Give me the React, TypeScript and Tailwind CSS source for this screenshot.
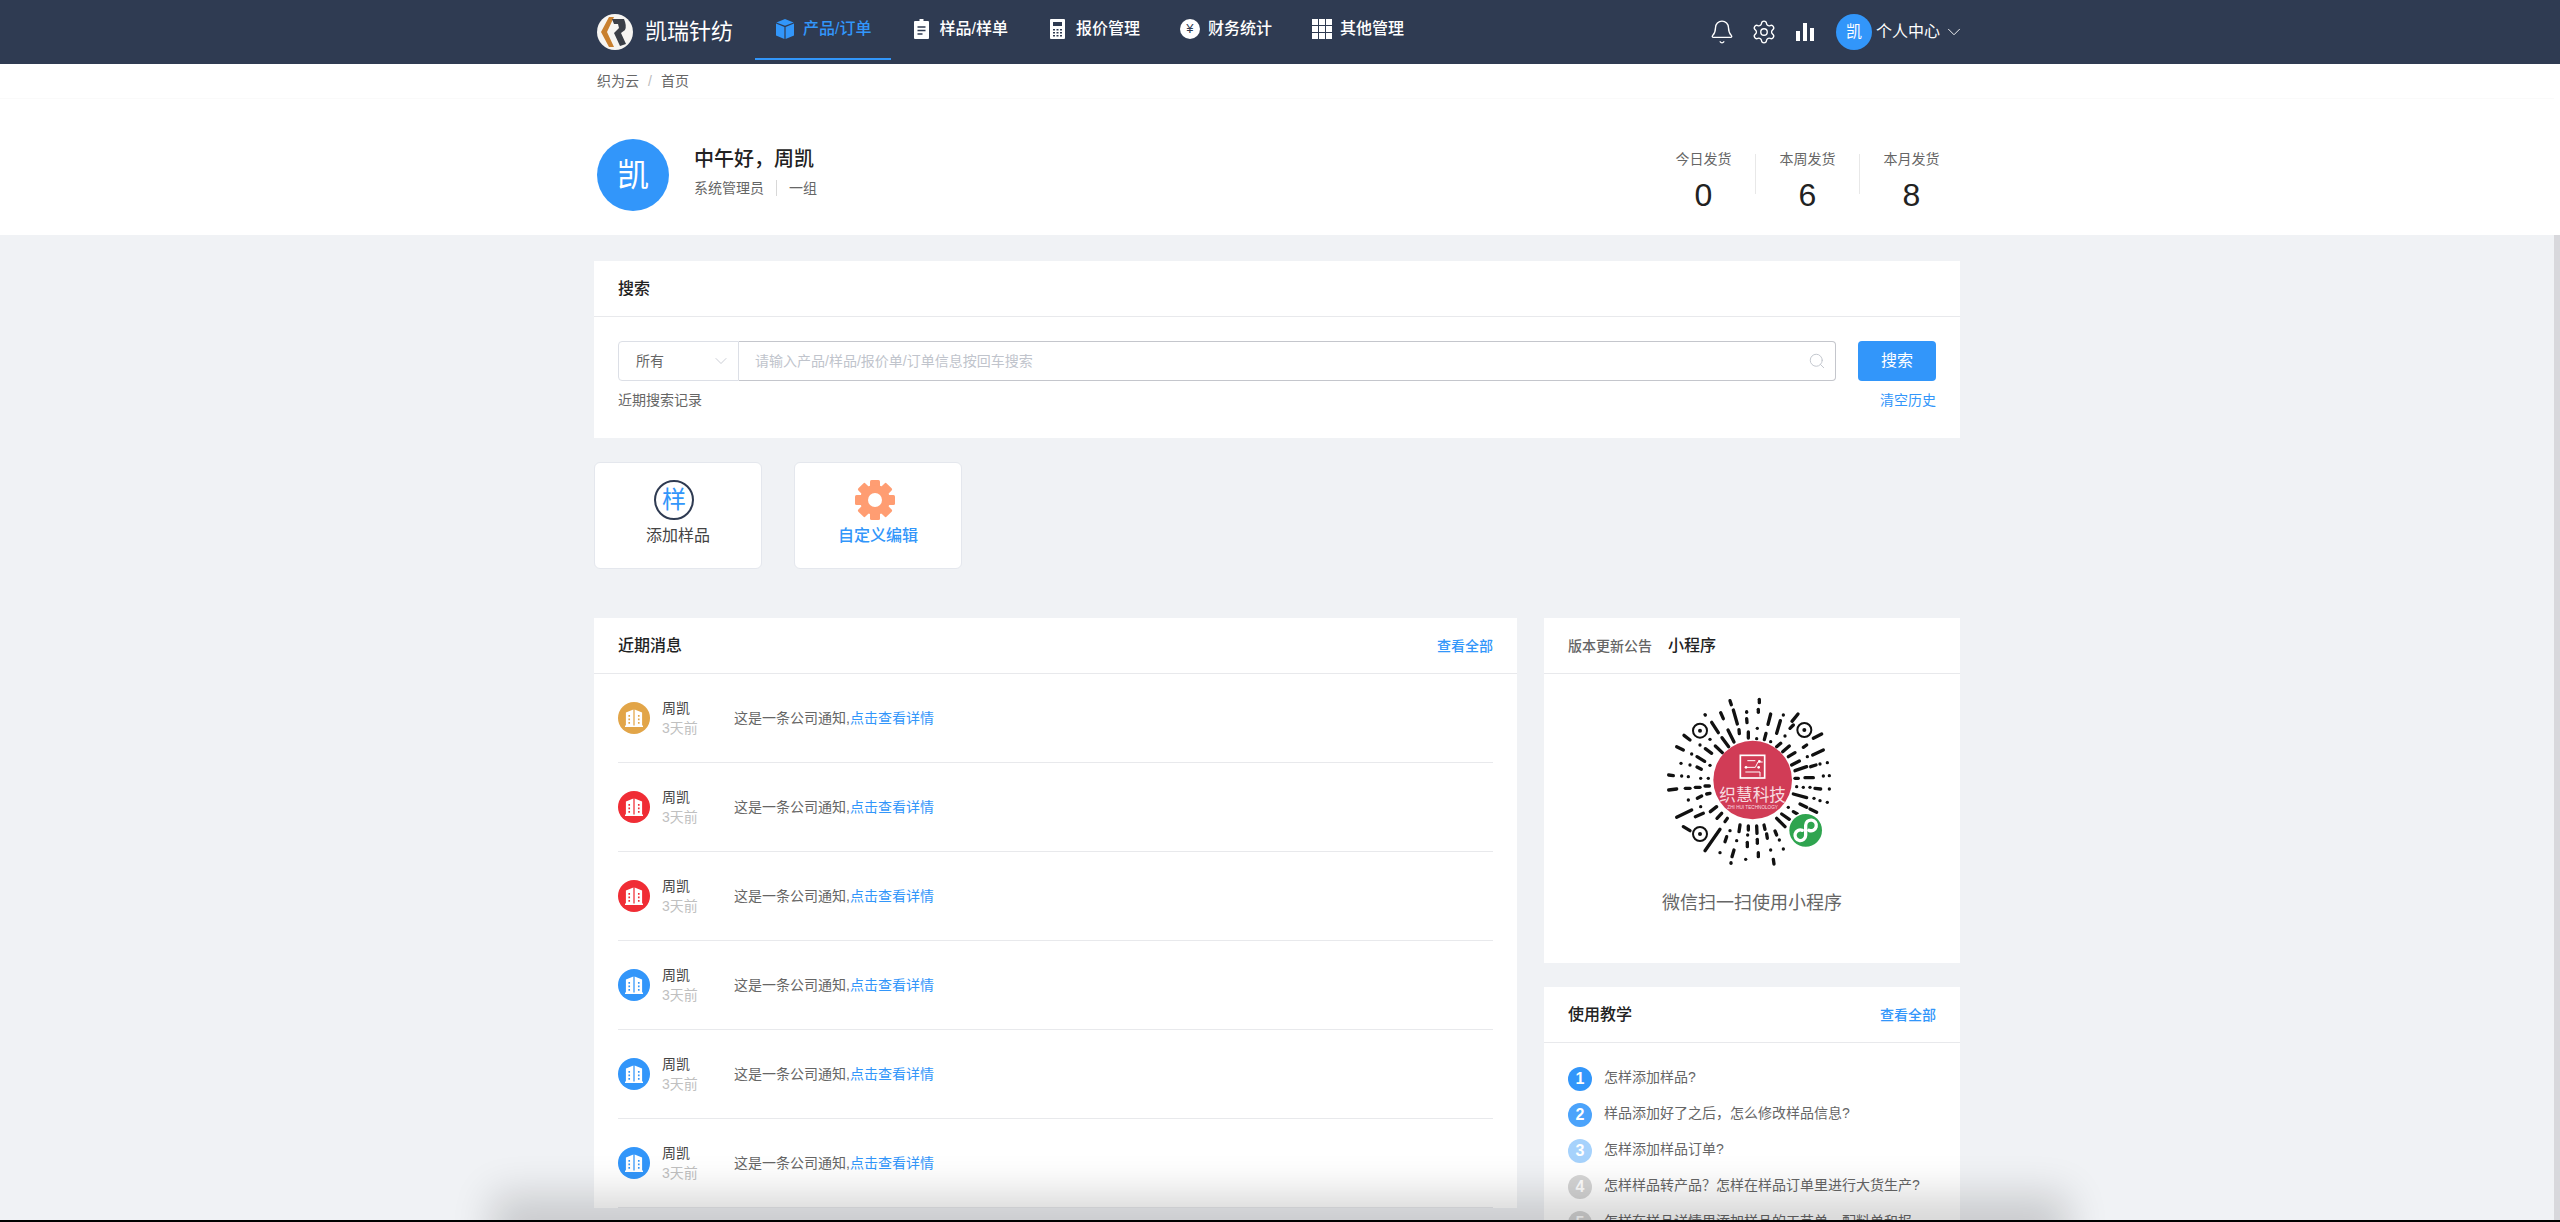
import React from "react";
import { Bell, ChevronDown, Search, Settings } from "lucide-react";

const FONT = "[font-family:'Liberation_Sans','Noto_Sans_CJK_SC',sans-serif]";

// dashes of the mini program code, in a 540 box
const QR_DASHES = [
  [210, 32, 214, 44], [298, 28, 298, 38], [295, 58, 295, 67], [182, 68, 190, 86], [220, 60, 232, 102],
  [260, 65, 260, 67], [260, 86, 261, 98], [332, 72, 324, 103], [370, 75, 370, 75], [361, 92, 350, 130],
  [414, 72, 396, 94], [135, 74, 136, 75], [155, 97, 175, 128], [292, 115, 292, 115], [237, 119, 238, 131],
  [204, 120, 222, 156], [265, 126, 265, 144], [318, 130, 313, 149], [290, 146, 290, 146], [150, 148, 150, 148],
  [186, 143, 206, 170], [166, 168, 187, 188], [136, 176, 155, 190], [111, 200, 134, 214], [72, 136, 90, 150],
  [50, 170, 70, 180], [95, 192, 95, 192], [120, 165, 120, 165], [63, 220, 63, 220], [90, 225, 90, 225],
  [111, 231, 124, 238], [150, 226, 150, 226], [26, 255, 40, 257], [65, 258, 65, 258], [85, 260, 85, 260],
  [122, 265, 122, 265], [145, 265, 145, 265], [26, 300, 50, 297], [76, 295, 90, 295], [106, 292, 120, 292],
  [135, 288, 148, 288], [112, 325, 125, 318], [140, 312, 150, 310], [85, 330, 85, 330], [50, 382, 95, 360],
  [122, 350, 122, 350], [106, 380, 130, 370], [151, 365, 170, 350], [171, 385, 185, 370], [195, 395, 202, 385],
  [70, 410, 90, 422], [135, 482, 180, 418], [180, 488, 180, 488], [200, 440, 195, 455], [210, 422, 210, 422],
  [230, 452, 230, 452], [222, 480, 216, 500], [213, 518, 213, 520], [257, 508, 257, 508], [240, 405, 237, 425],
  [265, 408, 265, 420], [263, 435, 263, 435], [262, 457, 262, 470], [290, 408, 291, 430], [292, 448, 292, 460],
  [295, 488, 295, 500], [312, 405, 315, 418], [320, 432, 322, 445], [332, 480, 332, 480], [340, 508, 342, 522],
  [345, 423, 350, 435], [358, 450, 358, 450], [370, 477, 370, 477], [350, 385, 375, 410], [365, 372, 388, 388],
  [400, 365, 412, 372], [385, 352, 385, 352], [420, 342, 440, 352], [450, 357, 470, 367], [400, 312, 440, 323],
  [462, 325, 462, 325], [480, 332, 480, 332], [502, 337, 502, 337], [410, 290, 410, 290], [430, 292, 430, 292],
  [450, 292, 450, 292], [465, 295, 482, 297], [508, 297, 508, 297], [405, 265, 415, 265], [435, 263, 460, 263],
  [490, 258, 490, 258], [508, 257, 508, 257], [405, 242, 440, 230], [452, 230, 468, 225], [480, 222, 480, 222],
  [502, 218, 502, 218], [395, 225, 418, 213], [385, 200, 405, 188], [368, 185, 388, 168], [458, 195, 490, 180],
  [430, 172, 440, 165], [442, 200, 442, 200], [350, 170, 362, 160], [332, 155, 332, 155], [375, 138, 375, 138],
  [390, 115, 400, 105], [460, 145, 485, 132],
];

const MiniCode = () => (
  <svg viewBox="0 0 540 540" className="w-[180px] h-[180px] -ml-1">
    <defs>
      <clipPath id="qr-center">
        <circle cx="278" cy="270" r="118" />
      </clipPath>
    </defs>
    <g stroke="#111" strokeWidth="10" strokeLinecap="round">
      {QR_DASHES.map((d, i) => (
        <line key={i} x1={d[0]} y1={d[1]} x2={d[2]} y2={d[3]} />
      ))}
    </g>
    {[
      [120, 122],
      [433, 120],
      [120, 432],
    ].map(([x, y]) => (
      <g key={x + "-" + y}>
        <circle cx={x} cy={y} r="21" fill="none" stroke="#111" strokeWidth="6" />
        <circle cx={x} cy={y} r="6" fill="#111" />
      </g>
    ))}
    <circle cx="278" cy="270" r="118" fill="#d13c56" />
    <rect x="241" y="196" width="73" height="68" fill="none" stroke="#fff" strokeWidth="5" />
    <g stroke="#fff" strokeWidth="3" fill="none">
      <path d="M258 232h28l8-16h14M256 246h44v14M262 212h24" />
    </g>
    <circle cx="258" cy="232" r="4" fill="#fff" />
    <circle cx="296" cy="232" r="4" fill="#fff" />
    <circle cx="298" cy="214" r="4" fill="#fff" />
    <g clipPath="url(#qr-center)">
      <text x="278" y="332" textAnchor="middle" fontSize="50" fill="#f8dde1" className={FONT}>
        织慧科技
      </text>
      <text x="278" y="357" textAnchor="middle" fontSize="14" fill="#f8dde1" className={FONT}>
        ZHI HUI TECHNOLOGY
      </text>
    </g>
    <circle cx="437" cy="421" r="54" fill="#fff" />
    <circle cx="437" cy="421" r="49" fill="#2fa44f" />
    <path
      d="M427 421A16 16 0 1 0 437 436V406A16 16 0 1 1 447 421"
      fill="none"
      stroke="#fff"
      strokeWidth="10"
      strokeLinecap="round"
    />
  </svg>
);

const Logo = () => (
  <svg viewBox="0 0 36 36" className="w-[38px] h-9 shrink-0">
    <circle cx="18" cy="18" r="18" fill="#f7f5f2" />
    <path d="M12 3 L4 18 L12 33 L17 33 L10 18 L17 3 Z" fill="#c9802f" />
    <path
      d="M15 5 L27 5 Q30 12 28 16 L24 19 L29 30 L23 32 L17 19 L22 14 L21 10 L17 10 Z"
      fill="#3b3f47"
    />
  </svg>
);

const CubeIcon = () => (
  <svg viewBox="0 0 20 20" className="w-5 h-5">
    <path d="M10 0 18.6 3.4 10 6.8 1.4 3.4Z" fill="#3296fa" />
    <path d="M1 4.6 9.4 8V20L1 16.6Z" fill="#3296fa" />
    <path d="M19 4.6 10.6 8V20L19 16.6Z" fill="#3296fa" />
  </svg>
);

const ClipboardIcon = () => (
  <svg viewBox="0 0 15 20" className="w-[15px] h-5">
    <path d="M5.5 0h4v2H14a1 1 0 0 1 1 1v16a1 1 0 0 1-1 1H1a1 1 0 0 1-1-1V3a1 1 0 0 1 1-1h4.500z" fill="#fff" />
    <path d="M3.500 8h8M3.500 11.500h8M3.500 15h5" stroke="#2f3b52" strokeWidth="1.300" />
  </svg>
);

const CalcIcon = () => (
  <svg viewBox="0 0 15 20" className="w-[15px] h-5">
    <rect width="15" height="20" rx="1" fill="#fff" />
    <rect x="3" y="3" width="9" height="4" fill="#2f3b52" />
    <path
      d="M3 10h2v1.500H3zM6.500 10h2v1.500h-2zM10 10h2v1.500h-2zM3 13h2v1.500H3zM6.500 13h2v1.500h-2zM10 13h2v1.500h-2zM3 16h2v1.500H3zM6.500 16h2v1.500h-2zM10 16h2v1.500h-2z"
      fill="#2f3b52"
    />
  </svg>
);

const YenIcon = () => (
  <span className="w-5 h-5 rounded-full bg-white text-[#2f3b52] text-[13px] leading-5 text-center">¥</span>
);

const GridIcon = () => (
  <span className="w-5 h-5 grid grid-cols-3 gap-[1.500px]">
    {[0, 1, 2, 3, 4, 5, 6, 7, 8].map((i) => (
      <span key={i} className="bg-white" />
    ))}
  </span>
);

const BarsIcon = () => (
  <svg viewBox="0 0 20 20" className="w-5 h-5">
    <path d="M1 9h4v10H1zM8 1h4v18H8zM15 6h4v13h-4z" fill="#fff" />
  </svg>
);

const OrangeGear = () => (
  <svg viewBox="0 0 40 40" className="w-10 h-10 mr-[6px]">
    {[0, 45, 90, 135, 180, 225, 270, 315].map((a) => (
      <rect key={a} x="15" y="0" width="10" height="10" rx="1.500" fill="#ff9d72" transform={`rotate(${a} 20 20)`} />
    ))}
    <circle cx="20" cy="20" r="15" fill="#ff9d72" />
    <circle cx="20" cy="20" r="7" fill="#fff" />
  </svg>
);

const Building = () => (
  <svg viewBox="0 0 20 20" preserveAspectRatio="none" className="w-[18px] h-5">
    <path d="M1 4.500 9.300 1.500V18H1zM10.700 1.500 19 4.500V18h-8.300z" fill="#fff" />
    <path d="M0 17.500h20V19H0z" fill="#fff" />
    <path
      d="M3.800 7h1.800v1.800H3.800zM3.800 10.500h1.800v1.800H3.800zM3.800 14h1.800v1.800H3.800zM14.400 7h1.800v1.800h-1.800zM14.400 10.500h1.800v1.800h-1.800zM14.400 14h1.800v1.800h-1.800z"
      fill="currentColor"
    />
  </svg>
);

const navItems = [
  { label: "产品/订单", icon: <CubeIcon />, active: true },
  { label: "样品/样单", icon: <ClipboardIcon /> },
  { label: "报价管理", icon: <CalcIcon /> },
  { label: "财务统计", icon: <YenIcon /> },
  { label: "其他管理", icon: <GridIcon /> },
];

const stats = [
  { label: "今日发货", value: "0" },
  { label: "本周发货", value: "6" },
  { label: "本月发货", value: "8" },
];

const messageColors = [
  "bg-[#e2a548] text-[#e2a548]",
  "bg-[#f02d35] text-[#f02d35]",
  "bg-[#f02d35] text-[#f02d35]",
  "bg-[#3296fa] text-[#3296fa]",
  "bg-[#3296fa] text-[#3296fa]",
  "bg-[#3296fa] text-[#3296fa]",
];

const lessons = [
  { text: "怎样添加样品?", color: "bg-[#3296fa]" },
  { text: "样品添加好了之后\uFF0C怎么修改样品信息?", color: "bg-[#4ba3fb]" },
  { text: "怎样添加样品订单?", color: "bg-[#a6d2fc]" },
  { text: "怎样样品转产品\uFF1F怎样在样品订单里进行大货生产?", color: "bg-[#d6d6d6]" },
  { text: "怎样在样品详情里添加样品的工艺单\u3001配料单和报价单?", color: "bg-[#d6d6d6]" },
];

const CardHeader = ({ children }: { children: React.ReactNode }) => (
  <div className="h-[56px] px-6 border-b border-[#e8e9ec] flex items-center justify-between">{children}</div>
);

const App = () => {
  return (
    <div className={`relative h-screen overflow-hidden bg-[#f0f2f5] ${FONT}`}>
      <header className="h-16 bg-[#2f3b52] pr-[6px]">
        <div className="w-[1366px] h-full mx-auto flex">
          <div className="flex items-center pl-[2px] w-[161px] shrink-0">
            <Logo />
            <span className="ml-[11px] text-[22px] leading-8 text-white">凯瑞针纺</span>
          </div>
          <nav className="flex h-[60px]">
            {navItems.map((item) => (
              <div
                key={item.label}
                className={`px-5 flex items-center gap-2 border-b-2 font-medium text-base ${
                  item.active ? "border-[#3296fa] text-[#3296fa]" : "border-transparent text-white"
                }`}
              >
                <span className="w-5 h-5 flex items-center justify-center">{item.icon}</span>
                <span className="whitespace-nowrap">{item.label}</span>
              </div>
            ))}
          </nav>
          <div className="ml-auto flex items-center text-white">
            <Bell className="w-[26px] h-[26px]" strokeWidth={1.25} />
            <Settings className="ml-4 w-[26px] h-[26px]" strokeWidth={1.25} />
            <span className="ml-[18px]">
              <BarsIcon />
            </span>
            <span className="ml-[21px] w-9 h-9 rounded-full bg-[#3296fa] text-base leading-9 text-center">凯</span>
            <span className="ml-1 text-base">个人中心</span>
            <ChevronDown className="ml-[3px] -mr-[5px] w-[22px] h-[22px]" strokeWidth={1} />
          </div>
        </div>
      </header>

      <section className="bg-white pr-[6px]">
        <div className="h-[35px] border-b border-[#fafafa]">
          <div className="w-[1366px] h-full mx-auto pl-[3px] flex items-center text-sm text-[#666]">
            <span>织为云</span>
            <span className="mx-[9px] text-[#bbb]">/</span>
            <span>首页</span>
          </div>
        </div>
        <div className="w-[1366px] h-[136px] mx-auto pl-[3px] flex justify-between">
          <div className="flex items-center pt-[15px]">
            <div className="w-[72px] h-[72px] rounded-full bg-[#3296fa] text-white text-[32px] leading-[72px] text-center">
              凯
            </div>
            <div className="ml-[25px] mb-[6px]">
              <div className="text-xl leading-7 font-medium text-[#222]">{"中午好\uFF0C周凯"}</div>
              <div className="mt-[5px] flex items-center text-sm leading-5 text-[#666]">
                <span>系统管理员</span>
                <span className="mx-3 w-px h-4 bg-[#d8d8d8]" />
                <span>一组</span>
              </div>
            </div>
          </div>
          <div className="flex pt-[50px] -mr-[3px]">
            {stats.map((s, i) => (
              <React.Fragment key={s.label}>
                {i > 0 && <span className="w-px h-10 mt-[5px] bg-[#e8e8e8]" />}
                <div className="w-[103px] flex flex-col items-center">
                  <span className="text-sm leading-5 text-[#666]">{s.label}</span>
                  <span className="mt-[6px] text-[32px] leading-10 text-[#222]">{s.value}</span>
                </div>
              </React.Fragment>
            ))}
          </div>
        </div>
      </section>

      <main className="w-[1366px] mx-auto pt-[26px] -translate-x-[3px]">
        <div className="bg-white">
          <CardHeader>
            <span className="text-base font-medium text-[#222]">搜索</span>
          </CardHeader>
          <div className="px-6 pt-6 pb-7">
            <div className="flex h-10">
              <div className="w-[121px] pl-[17px] pr-[7px] flex items-center justify-between border border-[#dcdfe6] rounded-l text-sm text-[#666]">
                <span>所有</span>
                <ChevronDown className="w-5 h-5 text-[#c0c4cc]" strokeWidth={1} />
              </div>
              <div className="w-[1097px] pl-4 pr-[9px] flex items-center justify-between border border-l-0 border-[#c4c6cc] rounded-r text-sm text-[#c0c4cc]">
                <span>请输入产品/样品/报价单/订单信息按回车搜索</span>
                <Search className="w-[18px] h-[18px]" strokeWidth={1.25} />
              </div>
              <button className="ml-auto w-[78px] rounded bg-[#3296fa] text-white text-base">搜索</button>
            </div>
            <div className="mt-[9px] flex justify-between text-sm leading-5">
              <span className="text-[#666]">近期搜索记录</span>
              <span className="text-[#3296fa]">清空历史</span>
            </div>
          </div>
        </div>

        <div className="mt-6 flex gap-[32px]">
          <div className="w-[168px] h-[107px] pt-[17px] bg-white border border-[#e4e7ed] rounded-md flex flex-col items-center">
            <span className="mr-2 w-10 h-10 rounded-full border-[2.500px] border-[#2f3b52] text-[#3296fa] text-2xl leading-[35px] text-center">
              样
            </span>
            <span className="mt-1 text-base leading-6 text-[#444]">添加样品</span>
          </div>
          <div className="w-[168px] h-[107px] pt-[17px] bg-white border border-[#e4e7ed] rounded-md flex flex-col items-center">
            <OrangeGear />
            <span className="mt-1 text-base leading-6 font-medium text-[#3296fa]">自定义编辑</span>
          </div>
        </div>

        <div className="mt-[49px] flex gap-[27px] items-start">
          <div className="w-[923px] bg-white">
            <CardHeader>
              <span className="text-base font-medium text-[#222]">近期消息</span>
              <span className="text-sm font-medium text-[#3296fa]">查看全部</span>
            </CardHeader>
            <div className="px-6">
              {messageColors.map((color, i) => (
                <div key={i} className="h-[89px] border-b border-[#e8e9ec] flex items-center">
                  <span className={`w-8 h-8 rounded-full flex items-center justify-center ${color}`}>
                    <Building />
                  </span>
                  <div className="ml-3 w-[72px] text-sm leading-5">
                    <div className="text-[#444]">周凯</div>
                    <div className="text-[#c0c0c0]">3天前</div>
                  </div>
                  <span className="text-sm text-[#666]">
                    这是一条公司通知,<span className="text-[#3296fa]">点击查看详情</span>
                  </span>
                </div>
              ))}
            </div>
          </div>

          <div className="w-[416px] flex flex-col gap-6">
            <div className="bg-white h-[345px]">
              <div className="h-[56px] px-6 border-b border-[#e8e9ec] flex items-center gap-4">
                <span className="text-sm font-medium text-[#666]">版本更新公告</span>
                <span className="text-base font-medium text-[#222]">小程序</span>
              </div>
              <div className="pt-4 flex flex-col items-center">
                <MiniCode />
                <span className="mt-[19px] text-lg leading-7 text-[#666]">微信扫一扫使用小程序</span>
              </div>
            </div>
            <div className="bg-white">
              <CardHeader>
                <span className="text-base font-medium text-[#222]">使用教学</span>
                <span className="text-sm font-medium text-[#3296fa]">查看全部</span>
              </CardHeader>
              <div className="px-6 pt-6 flex flex-col gap-3">
                {lessons.map((l, i) => (
                  <div key={i} className="flex items-start gap-3 h-6">
                    <span className={`w-6 h-6 rounded-full text-white text-base font-bold leading-6 text-center ${l.color}`}>
                      {i + 1}
                    </span>
                    <span className="w-[320px] text-sm leading-5 text-[#666]">{l.text}</span>
                  </div>
                ))}
              </div>
            </div>
          </div>
        </div>
      </main>

      {/* scrollbar track */}
      <div className="absolute right-0 top-[235px] bottom-0 w-[6px] bg-[#d8d8dc]" />
      {/* window shadow and edge at the bottom */}
      <div className="absolute left-[520px] right-[520px] -bottom-[12px] h-[12px] shadow-[0_0_40px_28px_rgba(0,0,0,0.16)]" />
      <div className="absolute left-0 right-0 bottom-0 h-[2px] bg-black" />
    </div>
  );
};

export default App;
